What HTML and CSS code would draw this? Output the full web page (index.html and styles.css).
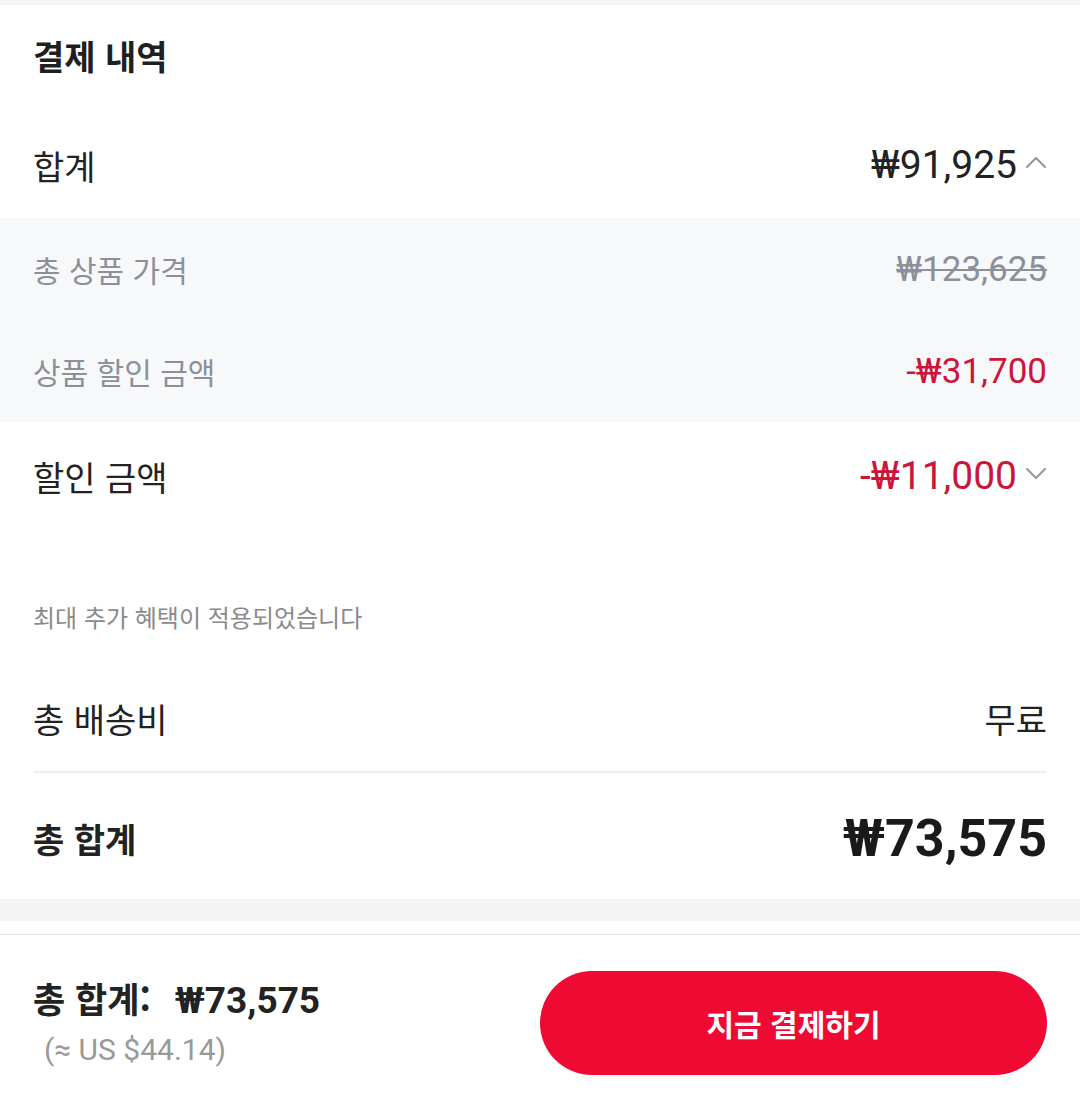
FILE: index.html
```html
<!DOCTYPE html>
<html lang="ko">
<head>
<meta charset="utf-8">
<link rel="stylesheet" href="styles.css">
</head>
<body>
<div class="page">
  <div class="topgap"></div>
  <section class="card">
    <h2 class="title">결제 내역</h2>
    <div class="row">
      <span class="label">합계</span>
      <span class="value">₩91,925<svg class="chev" viewBox="0 0 22 14" width="22" height="14"><path d="M2 12 L11 3 L20 12" fill="none" stroke="#9a9a9a" stroke-width="2.2" stroke-linecap="round" stroke-linejoin="round"/></svg></span>
    </div>
    <div class="sub">
      <div class="row subrow">
        <span class="label grey">총 상품 가격</span>
        <span class="value grey strike">₩123,625</span>
      </div>
      <div class="row subrow">
        <span class="label grey">상품 할인 금액</span>
        <span class="value red">-₩31,700</span>
      </div>
    </div>
    <div class="row disc">
      <span class="label">할인 금액</span>
      <span class="value red">-₩11,000<svg class="chev" viewBox="0 0 22 14" width="22" height="14"><path d="M2 3 L11 12 L20 3" fill="none" stroke="#9a9a9a" stroke-width="2.2" stroke-linecap="round" stroke-linejoin="round"/></svg></span>
    </div>
    <div class="blank"></div>
    <p class="note">최대 추가 혜택이 적용되었습니다</p>
    <div class="row">
      <span class="label">총 배송비</span>
      <span class="value plain">무료</span>
    </div>
    <div class="divider"></div>
    <div class="row total">
      <span class="label bold">총 합계</span>
      <span class="value big">₩73,575</span>
    </div>
  </section>
  <div class="band"></div>
  <div class="gap"></div>
  <footer class="bar">
    <div class="sum">
      <div class="sumline"><span class="sumlabel">총 합계:</span><span class="sumval">₩73,575</span></div>
      <div class="usd">(≈ US $44.14)</div>
    </div>
    <button class="pay">지금 결제하기</button>
  </footer>
</div>
</body>
</html>
```

FILE: styles.css
```css
* { box-sizing: border-box; }
html, body { margin: 0; padding: 0; background: #ffffff; }
body {
  font-family: Roboto, "Noto Sans CJK KR", sans-serif;
  color: #222222;
  width: 1080px;
  height: 1098px;
  overflow: hidden;
}
.topgap { height: 5px; background: #f4f4f4; }
.card { background: #ffffff; }
.title {
  margin: 0;
  height: 107px;
  display: flex;
  align-items: center;
  padding: 0 33px 6px;
  font-family: "Noto Sans CJK KR", sans-serif;
  font-weight: 700;
  font-size: 34px;
  color: #1f1f1f;
}
.row {
  height: 106px;
  display: flex;
  align-items: center;
  justify-content: space-between;
  padding: 0 33px;
}
.label {
  font-family: "Noto Sans CJK KR", sans-serif;
  font-size: 34px;
  color: #222;
}
.label.bold { font-weight: 700; }
.value {
  display: flex;
  align-items: center;
  font-family: Roboto, "Noto Sans CJK KR", sans-serif;
  font-size: 39px;
  color: #222;
}
.value.plain { font-family: "Noto Sans CJK KR", sans-serif; font-size: 34px; }
.chev { margin-left: 8px; margin-top: -6px; }
.sub { background: #f7f8fa; }
.subrow { height: 102px; }
.grey { color: #8b9099; }
.label.grey { font-size: 30px; }
.value.grey { font-size: 35px; }
.strike { text-decoration: line-through; text-decoration-thickness: 2px; }
.red { color: #cc1539; }
.value.red { font-size: 35px; }
.disc { height: 108px; }
.disc .value { font-size: 39px; }
.blank { height: 70px; }
.note {
  margin: 0;
  padding: 0 33px;
  height: 65px;
  line-height: 34px;
  font-family: "Noto Sans CJK KR", sans-serif;
  font-size: 24px;
  color: #8a8a8a;
}
.divider { height: 2px; background: #eeeeee; margin: 0 33px; }
.total { height: 126px; padding-top: 4px; }
.value.big { font-weight: 700; font-size: 52px; color: #1a1a1a; }
.band { height: 22px; background: #f4f4f4; }
.gap { height: 14px; border-bottom: 1px solid #e6e6e6; }
.bar {
  height: 163px;
  display: flex;
  align-items: center;
  justify-content: space-between;
  padding: 12px 33px 0;
}
.sum { display: flex; flex-direction: column; }
.sumline {
  display: flex;
  align-items: baseline;
  gap: 24px;
  font-weight: 700;
  font-size: 35px;
  color: #222;
  line-height: 46px;
}
.sumlabel { font-family: "Noto Sans CJK KR", sans-serif; }
.sumval { font-family: Roboto, sans-serif; font-size: 37px; }
.usd {
  margin-top: 6px;
  padding-left: 11px;
  font-family: Roboto, sans-serif;
  font-size: 30px;
  color: #999999;
  line-height: 40px;
}
.pay {
  width: 507px;
  height: 104px;
  border: none;
  border-radius: 52px;
  background: #ee0a33;
  color: #ffffff;
  font-family: "Noto Sans CJK KR", sans-serif;
  font-weight: 700;
  font-size: 30px;
}
```
